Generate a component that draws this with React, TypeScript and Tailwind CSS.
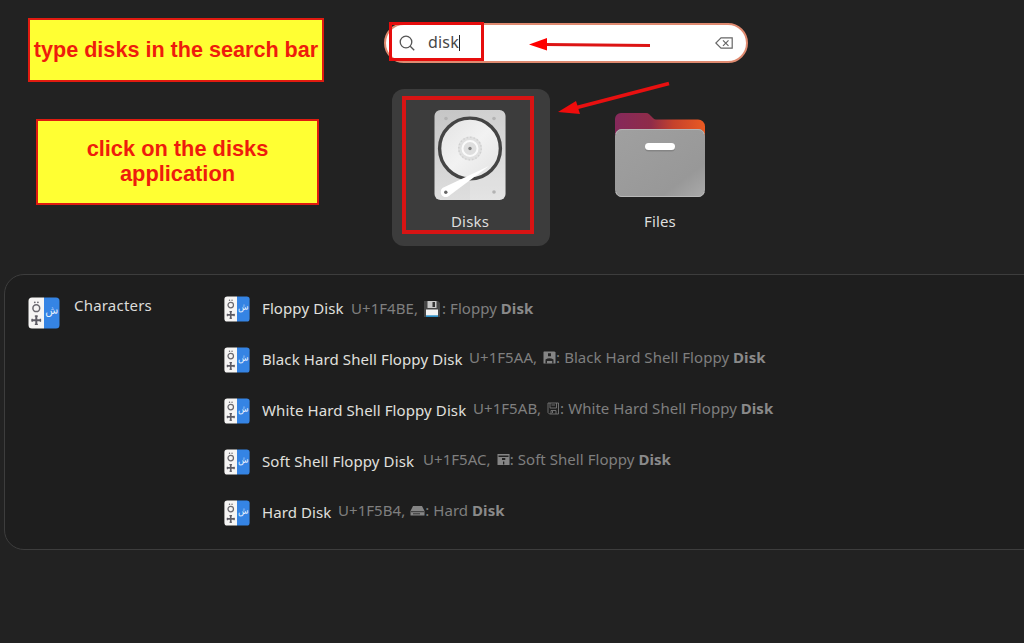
/**
 * ActivitiesSearch: GNOME activities overview with search results for "disk",
 * plus the tutorial notes, frames and arrows drawn over it.
 */

import type { ReactNode } from 'react'

// ── Result data ──────────────────────────────────────────────────────────────

type GlyphName = 'floppy' | 'black' | 'white' | 'soft' | 'hard'

interface CharacterResult {
  title: string
  code: string
  glyph: GlyphName
  prefix: string
  titleClass: string
  detailClass: string
}

const RESULTS: CharacterResult[] = [
  { title: 'Floppy Disk', code: 'U+1F4BE,', glyph: 'floppy', prefix: 'Floppy', titleClass: 'w-[89px]', detailClass: '' },
  { title: 'Black Hard Shell Floppy Disk', code: 'U+1F5AA,', glyph: 'black', prefix: 'Black Hard Shell Floppy', titleClass: 'w-[207px]', detailClass: 'pb-1' },
  { title: 'White Hard Shell Floppy Disk', code: 'U+1F5AB,', glyph: 'white', prefix: 'White Hard Shell Floppy', titleClass: 'w-[211px]', detailClass: 'pb-1' },
  { title: 'Soft Shell Floppy Disk', code: 'U+1F5AC,', glyph: 'soft', prefix: 'Soft Shell Floppy', titleClass: 'w-[161px]', detailClass: 'pb-1' },
  { title: 'Hard Disk', code: 'U+1F5B4,', glyph: 'hard', prefix: 'Hard', titleClass: 'w-[76px]', detailClass: 'pb-1' },
]

// ── Icons ────────────────────────────────────────────────────────────────────

function CharactersIcon({ className }: { className: string }) {
  return (
    <svg viewBox="0 0 32 32" className={className}>
      <path d="M4 .5h12v31H4a3.5 3.5 0 0 1-3.5-3.5V4A3.5 3.5 0 0 1 4 .5Z" fill="#f6f5f4" />
      <path d="M16 .5h12A3.5 3.5 0 0 1 31.500 4v24a3.500 3.500 0 0 1-3.500 3.500H16Z" fill="#3584e4" />
      <circle cx="8.300" cy="11.200" r="3.400" fill="none" stroke="#6b696f" strokeWidth="1.500" />
      <circle cx="6.800" cy="5.300" r=".9" fill="#6b696f" />
      <circle cx="9.900" cy="5.300" r=".9" fill="#6b696f" />
      <path d="M8.300 18.500v9.600M3.500 23.300h9.600" stroke="#5e5c64" strokeWidth="2" />
      <path d="M6.800 19.200h3M6.800 27.400h3M4.200 21.800v3M12.400 21.800v3" stroke="#5e5c64" strokeWidth="1.300" />
      <text x="23.800" y="17" textAnchor="middle" fontSize="11" fill="#e4effc" fontFamily="DejaVu Sans, sans-serif" transform="rotate(-6 24 16)">ش</text>
    </svg>
  )
}

function DiskIcon() {
  return (
    <svg viewBox="0 0 72 90" className="mr-0.5 h-[90px] w-[72px]">
      <defs>
        <linearGradient id="body" x1="0" y1="0" x2="0" y2="1">
          <stop offset="0" stopColor="#c6c6c6" />
          <stop offset="1" stopColor="#dedede" />
        </linearGradient>
        <linearGradient id="platter" x1="0" y1="0" x2="1" y2="1">
          <stop offset="0" stopColor="#e2e2e2" />
          <stop offset=".5" stopColor="#f2f2f2" />
          <stop offset="1" stopColor="#e2e2e2" />
        </linearGradient>
      </defs>
      <rect x=".5" width="71" height="90" rx="6" fill="url(#body)" />
      <path d="M36 0h29.500a6 6 0 0 1 6 6v78a6 6 0 0 1-6 6H36Z" fill="#fff" opacity=".18" />
      <g fill="#b3b3b3">
        <circle cx="12" cy="8.500" r="1.800" />
        <circle cx="60" cy="8.500" r="1.800" />
        <circle cx="60" cy="82" r="1.800" />
      </g>
      <circle cx="36" cy="38.500" r="30.400" fill="url(#platter)" stroke="#444" strokeWidth="3.400" />
      <circle cx="36" cy="38.500" r="12" fill="#e0e0e0" />
      <circle cx="36" cy="38.500" r="11.200" fill="none" stroke="#d0d0d0" strokeWidth="1.500" strokeDasharray="1.500 2" />
      <circle cx="36" cy="38.500" r="7.500" fill="#dedede" stroke="#fafafa" strokeWidth="2" />
      <circle cx="36" cy="38.500" r="1.700" fill="#808080" />
      <path d="M55 56 14.500 86.200a5 5 0 0 1-5.500-8.400Z" fill="#fff" />
      <circle cx="11.800" cy="82.200" r="4.800" fill="#fff" />
      <circle cx="11.800" cy="82.200" r="1.700" fill="#666" />
    </svg>
  )
}

function FolderIcon() {
  return (
    <svg viewBox="0 0 90 86" className="mt-0.5 mr-[3px] h-[86px] w-[90px]">
      <defs>
        <linearGradient id="back" x1="0" y1="0" x2="1" y2="0">
          <stop offset="0" stopColor="#85295b" />
          <stop offset=".4" stopColor="#8f2c49" />
          <stop offset=".65" stopColor="#c5422c" />
          <stop offset="1" stopColor="#ea5a22" />
        </linearGradient>
        <linearGradient id="front" x1="0" y1="0" x2="1" y2="1">
          <stop offset="0" stopColor="#a0a0a0" />
          <stop offset=".75" stopColor="#989898" />
          <stop offset="1" stopColor="#aaaaaa" />
        </linearGradient>
      </defs>
      <path d="M6 1h25q2 0 3.200 1.300l4.300 4.200Q39.500 7.500 41 7.500h42a7 7 0 0 1 7 7V50H0V7a6 6 0 0 1 6-6Z" fill="url(#back)" />
      <rect y="17" width="90" height="68" rx="7" fill="url(#front)" />
      <path d="M1 22q1-4.500 6-4.500h76q5 0 6 4.500" fill="none" stroke="#b5b5b5" strokeWidth="1" />
      <path d="M1 80q1 4.500 6 4.500h76q5 0 6-4.500" fill="none" stroke="#b8b8b8" strokeWidth="1" />
      <rect x="30" y="32" width="30" height="7.500" rx="3.500" fill="#858585" />
      <rect x="30" y="31" width="30" height="7" rx="3.500" fill="#fff" />
    </svg>
  )
}

function Glyph({ name }: { name: GlyphName }) {
  switch (name) {
    case 'floppy':
      return (
        <svg viewBox="0 0 18 18" className="mr-px h-[18px] w-[18px]">
          <path d="M1 1h14l2 2v14H1Z" fill="#454545" />
          <path d="M4.500 1h9v7h-9Z" fill="#c8c8c8" />
          <path d="M9.500 2h2.500v5H9.500Z" fill="#333" />
          <path d="M3 9.500h12V17H3Z" fill="#f4f4f4" />
          <path d="M3 15.300h12V17H3Z" fill="#2d8fc4" />
        </svg>
      )
    case 'black':
      return (
        <svg viewBox="0 0 13 13" className="ml-px h-[13px] w-[13px]">
          <path d="M1 .5h10.500l1 1v11H.5V1Z" fill="#858585" />
          <path d="M5 2.200h3v3H5ZM2.500 8.500q4-2.500 8 0v4h-1.300V10H4v2.500H2.500Z" fill="#252525" />
        </svg>
      )
    case 'white':
      return (
        <svg viewBox="0 0 13 13" className="ml-px h-[13px] w-[13px]" fill="none" stroke="#777" strokeWidth=".9">
          <path d="M1 1h10.500v11H2.500L1 10.500ZM3 1v5h6.500V1M4 12V8.500h5V12M5.500 9v2M4.500 3h3.500" />
        </svg>
      )
    case 'soft':
      return (
        <svg viewBox="0 0 13 13" className="ml-px h-[13px] w-[13px]">
          <path d="M.5 1h12v11H.5Z" fill="#858585" />
          <path d="M1.500 2.500h10v1.400h-10ZM5 5h3.300v2H5ZM6 8.500h1.300v3H6Z" fill="#222" />
        </svg>
      )
    case 'hard':
      return (
        <svg viewBox="0 0 15 12" className="h-[12px] w-[15px]">
          <path d="M3 1h9l2.500 5v4.500h-14V6Z" fill="#858585" />
          <path d="M1 6.700h13M3 8.800h7" stroke="#222" strokeWidth=".8" />
        </svg>
      )
  }
}

// ── Building blocks ──────────────────────────────────────────────────────────

function Note({ className, children }: { className: string; children: ReactNode }) {
  return (
    <div
      className={`flex items-center justify-center border-2 border-[#e01b10] bg-[#ffff33] pb-0.5 text-center font-['Liberation_Sans'] leading-[25px] font-bold whitespace-nowrap text-[#ee1c0c] ${className}`}
    >
      {children}
    </div>
  )
}

function AppTile({ label, selected, children }: { label: string; selected?: boolean; children: ReactNode }) {
  return (
    <div
      className={`relative flex h-[157px] w-[158px] flex-col items-center rounded-xl pt-[21px] ${selected ? 'bg-[#3c3c3c]' : ''}`}
    >
      {children}
      <span className="mt-auto mr-0.5 pb-[14px] text-[15px] leading-[21px] tracking-[0.15px] text-[#dedede]">{label}</span>
      {selected && <div className="absolute top-[7px] left-[10px] h-[138px] w-[132px] border-4 border-[#d81414]" />}
    </div>
  )
}

function ResultRow({ result }: { result: CharacterResult }) {
  return (
    <li className="flex h-[51px] items-center whitespace-nowrap">
      <CharactersIcon className="mr-[12px] h-[26px] w-[26px] shrink-0" />
      <span className={`shrink-0 text-[15px] tracking-[0.1px] text-[#e0e0de] ${result.titleClass}`}>{result.title}</span>
      <span className={`flex items-center text-[15px] tracking-[0.05px] text-[#7f7f7f] ${result.detailClass}`}>
        <span className="mr-[5px]">{result.code}</span>
        <Glyph name={result.glyph} />
        <span>
          : {result.prefix} <b className="text-[#8a8a8a]">Disk</b>
        </span>
      </span>
    </li>
  )
}

function Arrows() {
  return (
    <svg viewBox="0 0 160 90" className="pointer-events-none absolute top-[34px] left-[520px] h-[90px] w-[160px]">
      <path d="M25 10.500 130 11.500" stroke="#dc1414" strokeWidth="3" />
      <path d="M9 10.500 27 4v12.500Z" fill="#f00" />
      <path d="M55 74 149 49.500" stroke="#e81010" strokeWidth="3.800" />
      <path d="M38 78 56 67l4 13Z" fill="#f00c0c" />
    </svg>
  )
}

// ── Page ─────────────────────────────────────────────────────────────────────

export default function App() {
  return (
    <div className="relative h-[643px] w-[1024px] overflow-hidden bg-[#222222] font-['Noto_Sans',sans-serif]">
      <div className="flex h-[274px]">
        <aside className="flex w-[384px] shrink-0 flex-col pt-[18px] pl-7">
          <Note className="h-16 w-[296px] text-[21.6px]">type disks in the search bar</Note>
          <Note className="mt-[37px] ml-2 h-[86px] w-[283px] text-[21.8px]">
            click on the disks
            <br />
            application
          </Note>
        </aside>

        <main className="pt-[23px]">
          <div className="relative flex h-10 w-[364px] items-center rounded-full border-2 border-[#df8a70] bg-white pr-[13px] pl-[13px]">
            <svg viewBox="0 0 16 16" className="h-4 w-4" fill="none" stroke="#555" strokeWidth="1.300">
              <circle cx="7" cy="7" r="5.800" />
              <path d="m11.200 11.200 4 4" />
            </svg>
            <span className="ml-[13px] pb-0.5 text-[16px] leading-5 tracking-[0.2px] text-[#484848]">disk</span>
            <span className="h-4 w-px bg-[#222]" />
            <svg viewBox="0 0 18 12" className="ml-auto h-3 w-[18px]" fill="none" stroke="#666" strokeWidth="1.200">
              <path d="M6 .8h11.200v10.400H6L.8 6ZM8 3.300l5.500 5.500M13.500 3.300 8 8.800" />
            </svg>
            <div className="absolute -top-[3px] left-[3px] h-[39px] w-[95px] border-[3px] border-[#e60d0d]" />
          </div>

          <div className="mt-[26px] ml-2 flex gap-8">
            <AppTile label="Disks" selected>
              <DiskIcon />
            </AppTile>
            <AppTile label="Files">
              <FolderIcon />
            </AppTile>
          </div>
        </main>
      </div>

      <section className="ml-1 flex h-[276px] w-[1060px] rounded-[20px] border border-[#3d3d3d] bg-[#1e1e1e] pt-[8px]">
        <div className="flex w-[219px] shrink-0 items-start pt-[13px] pl-[23px]">
          <CharactersIcon className="mt-[1px] h-8 w-8" />
          <span className="ml-[14px] text-[15px] leading-[18px] tracking-[0.2px] text-[#dcdcda]">Characters</span>
        </div>
        <ul>
          {RESULTS.map((result) => (
            <ResultRow key={result.code} result={result} />
          ))}
        </ul>
      </section>

      <Arrows />
    </div>
  )
}
